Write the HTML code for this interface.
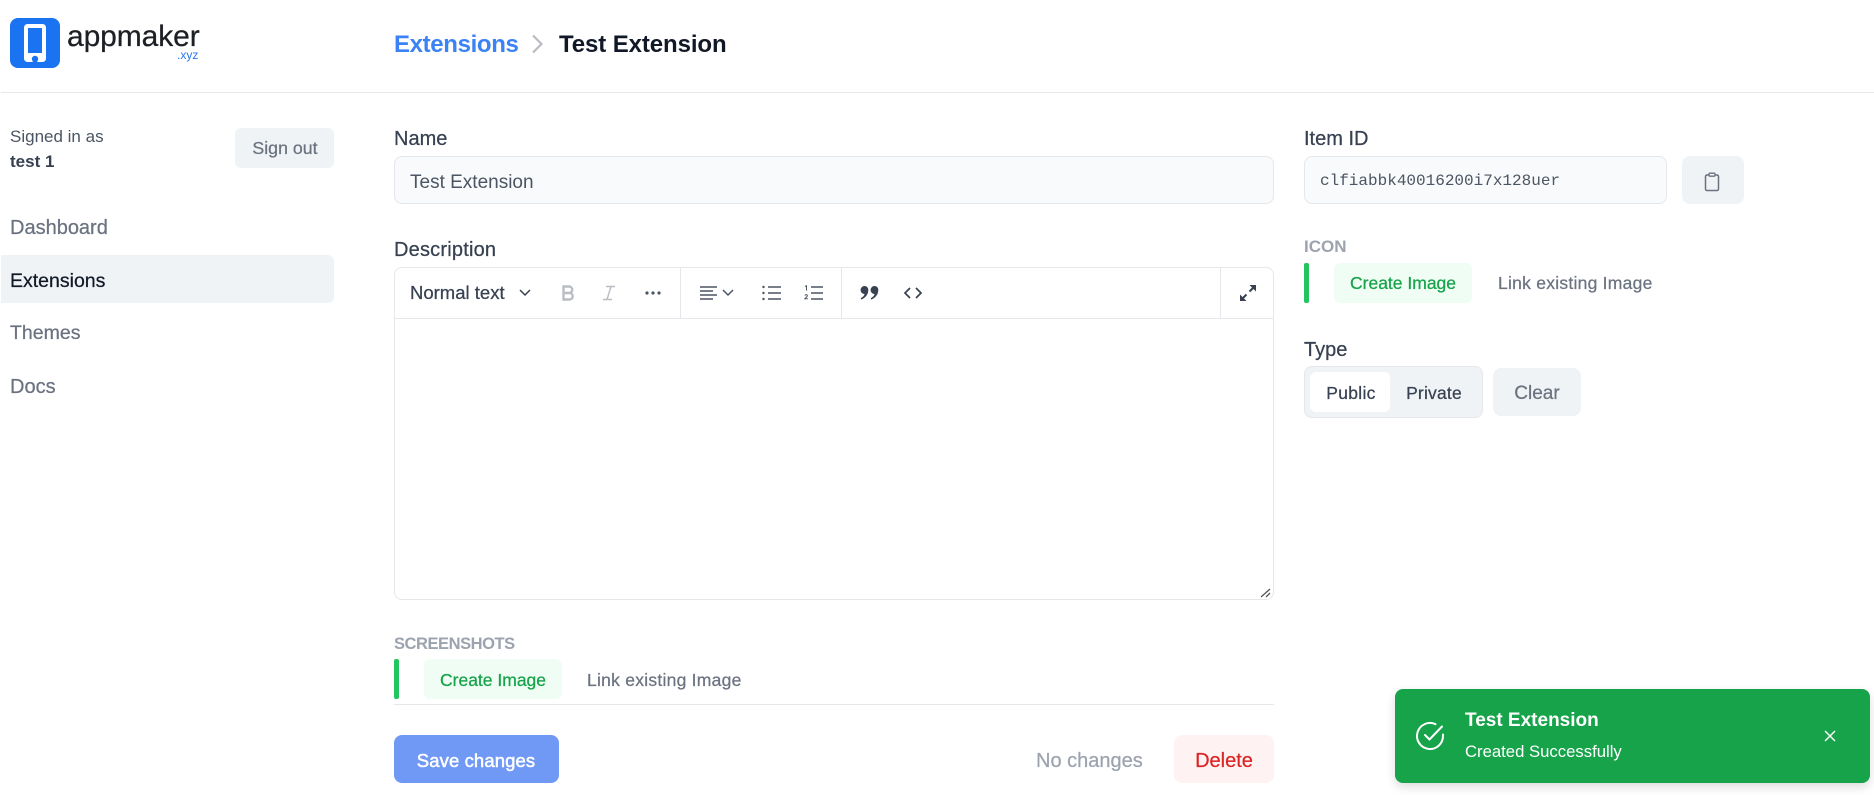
<!DOCTYPE html>
<html lang="en">
<head>
<meta charset="utf-8">
<title>Test Extension</title>
<style>
html,body{margin:0;padding:0;background:#fff;width:1874px;height:799px;overflow:hidden}
body{position:relative;font-family:"Liberation Sans",sans-serif;color:#374151}
.b{position:absolute;box-sizing:border-box}
.t{position:absolute;white-space:nowrap;line-height:24px;height:24px;font-size:16px}
.c{transform:translateX(-50%)}
.m{-webkit-text-stroke:.25px}
svg{position:absolute;overflow:visible}
</style>
</head>
<body>
<!-- header -->
<div class="b" style="left:1px;top:92px;width:1873px;height:1px;background:#e5e7eb"></div>
<div class="b" style="left:10px;top:18px;width:50px;height:50px;border-radius:8px;background:#1a73f0"></div>
<svg style="left:10px;top:18px" width="50" height="50" viewBox="0 0 50 50"><rect x="14" y="6" width="22" height="38" rx="3.500" fill="#fff"/><rect x="18" y="10" width="14" height="25" fill="#1a73f0"/><circle cx="25" cy="41" r="3.200" fill="#1a73f0"/><rect x="22.800" y="41" width="4.400" height="3.200" fill="#1a73f0"/></svg>
<div class="t m" style="left:67px;top:22px;font-size:30px;line-height:30px;height:30px;color:#1c1f24;letter-spacing:-.1px">appmaker</div>
<div class="t" style="left:177px;top:43px;font-size:12px;color:#2b78f0">.xyz</div>

<div class="t" style="left:394px;top:31px;font-size:24px;line-height:28px;height:28px;font-weight:700;color:#3b82f6;letter-spacing:-.35px">Extensions</div>
<svg style="left:530px;top:33px" width="16" height="22" viewBox="0 0 16 22"><path d="M3 2.500l8.500 8.500-8.500 8.500" fill="none" stroke="#b8bcc2" stroke-width="2.200"/></svg>
<div class="t" style="left:559px;top:31px;font-size:24px;line-height:28px;height:28px;font-weight:700;color:#111827;letter-spacing:-.1px">Test Extension</div>

<!-- sidebar -->
<div class="t" style="left:10px;top:125px;font-size:17px;color:#4b5563">Signed in as</div>
<div class="t" style="left:10px;top:150px;font-size:17px;font-weight:700;color:#374151">test 1</div>
<div class="b" style="left:235px;top:128px;width:99px;height:40px;border-radius:6px;background:#f0f3f6"></div>
<div class="t c m" style="left:285px;top:136px;font-size:17.8px;color:#6b7280">Sign out</div>
<div class="t m" style="left:10px;top:216px;font-size:20px;color:#6b7280">Dashboard</div>
<div class="b" style="left:1px;top:255px;width:333px;height:48px;border-radius:0 6px 6px 0;background:#f0f3f6"></div>
<div class="t m" style="left:10px;top:269px;font-size:19.5px;color:#111827">Extensions</div>
<div class="t m" style="left:10px;top:321px;font-size:19.5px;color:#6b7280">Themes</div>
<div class="t m" style="left:10px;top:375px;font-size:20px;color:#6b7280">Docs</div>

<!-- name -->
<div class="t m" style="left:394px;top:127px;font-size:20px">Name</div>
<div class="b" style="left:394px;top:156px;width:880px;height:48px;border-radius:8px;background:#f9fafb;border:1px solid #e5e7eb"></div>
<div class="t" style="left:410px;top:171px;font-size:19px;color:#4b5563">Test Extension</div>

<!-- description -->
<div class="t m" style="left:394px;top:238px;font-size:20px;letter-spacing:.2px">Description</div>
<div class="b" style="left:394px;top:267px;width:880px;height:333px;border-radius:8px;border:1px solid #e5e7eb"></div>
<div class="b" style="left:395px;top:318px;width:878px;height:1px;background:#e5e7eb"></div>
<div class="b" style="left:680px;top:268px;width:1px;height:50px;background:#e5e7eb"></div>
<div class="b" style="left:841px;top:268px;width:1px;height:50px;background:#e5e7eb"></div>
<div class="b" style="left:1220px;top:268px;width:1px;height:50px;background:#e5e7eb"></div>
<div class="t m" style="left:410px;top:281px;font-size:18.5px;color:#374151">Normal text</div>
<svg style="left:519px;top:288px" width="12" height="10" viewBox="0 0 12 10"><path d="M1 2l5 5 5-5" fill="none" stroke="#374151" stroke-width="1.500"/></svg>
<svg style="left:561px;top:285px" width="14" height="16" viewBox="0 0 14 16"><path d="M2.500 1.500h5.500a3.200 3.200 0 0 1 0 6.500H2.500zM2.500 8h6.500a3.300 3.300 0 0 1 0 6.500H2.500z" fill="none" stroke="#b9bdc3" stroke-width="2.400"/></svg>
<svg style="left:602px;top:285px" width="14" height="16" viewBox="0 0 14 16"><path d="M4 1.500h9M1 14.500h9M9 1.500L5 14.500" fill="none" stroke="#b9bdc3" stroke-width="1.400"/></svg>
<svg style="left:645px;top:291px" width="16" height="4" viewBox="0 0 16 4"><circle cx="2" cy="2" r="1.600" fill="#4b5563"/><circle cx="8" cy="2" r="1.600" fill="#4b5563"/><circle cx="14" cy="2" r="1.600" fill="#4b5563"/></svg>
<svg style="left:700px;top:286px" width="34" height="14" viewBox="0 0 34 14"><path d="M0 1h17M0 5h13M0 9h17M0 13h13" stroke="#4b5563" stroke-width="1.500" fill="none"/><path d="M23 4l5 5 5-5" fill="none" stroke="#4b5563" stroke-width="1.500"/></svg>
<svg style="left:762px;top:285px" width="20" height="16" viewBox="0 0 20 16"><path d="M6 2h13M6 8h13M6 14h13" stroke="#4b5563" stroke-width="1.500"/><circle cx="1.500" cy="2" r="1.200" fill="#4b5563"/><circle cx="1.500" cy="8" r="1.200" fill="#4b5563"/><circle cx="1.500" cy="14" r="1.200" fill="#4b5563"/></svg>
<svg style="left:804px;top:285px" width="20" height="16" viewBox="0 0 20 16"><path d="M7 2h12M7 8h12M7 14h12" stroke="#4b5563" stroke-width="1.500"/><path d="M1 1.500L2.500 .8V5.500M.8 10.500c1-1.500 3-.8 2.500.6-.3.800-1.800 1.800-2.500 2.700h3" fill="none" stroke="#4b5563" stroke-width="1"/></svg>
<svg style="left:860px;top:285px" width="20" height="16" viewBox="0 0 20 16"><path fill="#374151" d="M4.500 1a3.800 3.800 0 0 1 3.800 4c0 4.500-3 8-7 9.500l-.6-1.200C3 12 4.300 10.500 4.600 9A4 4 0 0 1 4.500 1zM14.500 1a3.800 3.800 0 0 1 3.800 4c0 4.500-3 8-7 9.500l-.6-1.200c2.300-1.300 3.600-2.800 3.900-4.300A4 4 0 0 1 14.500 1z"/></svg>
<svg style="left:904px;top:287px" width="18" height="12" viewBox="0 0 18 12"><path d="M6 1L1 6l5 5M12 1l5 5-5 5" fill="none" stroke="#374151" stroke-width="1.700"/></svg>
<svg style="left:1239px;top:284px" width="18" height="18" viewBox="0 0 18 18"><path d="M10.500 7.500L16 2M2 16l5.500-5.500" stroke="#374151" stroke-width="2" fill="none"/><path d="M10.500 1h6.500v6.500zM1 10.500V17h6.500z" fill="#374151"/></svg>
<svg style="left:1260px;top:588px" width="11" height="10" viewBox="0 0 11 10"><path d="M1 9L10 1M6 9l4-4" stroke="#555" stroke-width="1.300" fill="none"/></svg>

<!-- screenshots -->
<div class="t" style="left:394px;top:632px;font-size:16.5px;font-weight:700;color:#9ca3af;letter-spacing:-.45px">SCREENSHOTS</div>
<div class="b" style="left:394px;top:659px;width:5px;height:40px;border-radius:2px;background:#22c55e"></div>
<div class="b" style="left:424px;top:659px;width:138px;height:40px;border-radius:6px;background:#f0fdf4"></div>
<div class="t m" style="left:440px;top:668px;font-size:17.5px;color:#16a34a">Create Image</div>
<div class="t m" style="left:587px;top:668px;font-size:17.5px;color:#6b7280;letter-spacing:.25px">Link existing Image</div>
<div class="b" style="left:394px;top:704px;width:880px;height:1px;background:#e5e7eb"></div>

<div class="b" style="left:394px;top:735px;width:165px;height:48px;border-radius:8px;background:#7099f5"></div>
<div class="t c" style="left:476px;top:749px;font-size:18.5px;color:#fff;-webkit-text-stroke:.5px;letter-spacing:.1px">Save changes</div>
<div class="t m" style="left:1036px;top:749px;font-size:20px;color:#9ca3af">No changes</div>
<div class="b" style="left:1174px;top:735px;width:100px;height:48px;border-radius:8px;background:#fef2f2"></div>
<div class="t c m" style="left:1224px;top:749px;font-size:20px;color:#dc2626">Delete</div>

<!-- right column -->
<div class="t m" style="left:1304px;top:127px;font-size:20px">Item ID</div>
<div class="b" style="left:1304px;top:156px;width:363px;height:48px;border-radius:8px;background:#f9fafb;border:1px solid #e5e7eb"></div>
<div class="t" style="left:1320px;top:169px;font-family:'Liberation Mono',monospace;color:#4b5563">clfiabbk40016200i7x128uer</div>
<div class="b" style="left:1682px;top:156px;width:62px;height:48px;border-radius:8px;background:#f0f3f6"></div>
<svg style="left:1703px;top:172px" width="18" height="20" viewBox="0 0 18 20"><rect x="2.500" y="3" width="13" height="15.500" rx="1.500" fill="none" stroke="#6b7280" stroke-width="1.500"/><rect x="6" y="1.200" width="6" height="3" rx="1" fill="#f0f3f6" stroke="#6b7280" stroke-width="1.300"/></svg>

<div class="t" style="left:1304px;top:235px;font-size:17px;font-weight:700;color:#9ca3af">ICON</div>
<div class="b" style="left:1304px;top:263px;width:5px;height:40px;border-radius:2px;background:#22c55e"></div>
<div class="b" style="left:1334px;top:263px;width:138px;height:40px;border-radius:6px;background:#f0fdf4"></div>
<div class="t m" style="left:1350px;top:271px;font-size:17.5px;color:#16a34a">Create Image</div>
<div class="t m" style="left:1498px;top:271px;font-size:17.5px;color:#6b7280;letter-spacing:.25px">Link existing Image</div>

<div class="t m" style="left:1304px;top:338px;font-size:20px">Type</div>
<div class="b" style="left:1304px;top:366px;width:179px;height:52px;border-radius:8px;background:#f0f3f6;border:1px solid #e5e7eb"></div>
<div class="b" style="left:1310px;top:372px;width:80px;height:40px;border-radius:6px;background:#fff"></div>
<div class="t c m" style="left:1351px;top:381px;font-size:17.5px;color:#374151;letter-spacing:.3px">Public</div>
<div class="t c m" style="left:1434px;top:381px;font-size:17.5px;color:#374151;letter-spacing:.2px">Private</div>
<div class="b" style="left:1493px;top:368px;width:88px;height:48px;border-radius:8px;background:#f0f3f6"></div>
<div class="t c m" style="left:1537px;top:382px;font-size:19px;color:#6b7280">Clear</div>

<!-- toast -->
<div class="b" style="left:1395px;top:689px;width:475px;height:94px;border-radius:8px;background:#16a34a;box-shadow:0 4px 10px rgba(0,0,0,.14)"></div>
<svg style="left:1415px;top:721px" width="30" height="30" viewBox="0 0 30 30"><path d="M28 13.500V15A13 13 0 1 1 20.500 3.200" fill="none" stroke="#fff" stroke-width="2" stroke-linecap="round"/><path d="M10 14l4.500 4.500L27 5.500" fill="none" stroke="#fff" stroke-width="2" stroke-linecap="round" stroke-linejoin="round"/></svg>
<div class="t" style="left:1465px;top:709px;font-size:19px;font-weight:700;color:#fff">Test Extension</div>
<div class="t" style="left:1465px;top:740px;font-size:16.7px;color:#fff">Created Successfully</div>
<svg style="left:1824px;top:730px" width="12" height="12" viewBox="0 0 12 12"><path d="M1 1l10 10M11 1L1 11" stroke="#fff" stroke-width="1.500"/></svg>
</body>
</html>
